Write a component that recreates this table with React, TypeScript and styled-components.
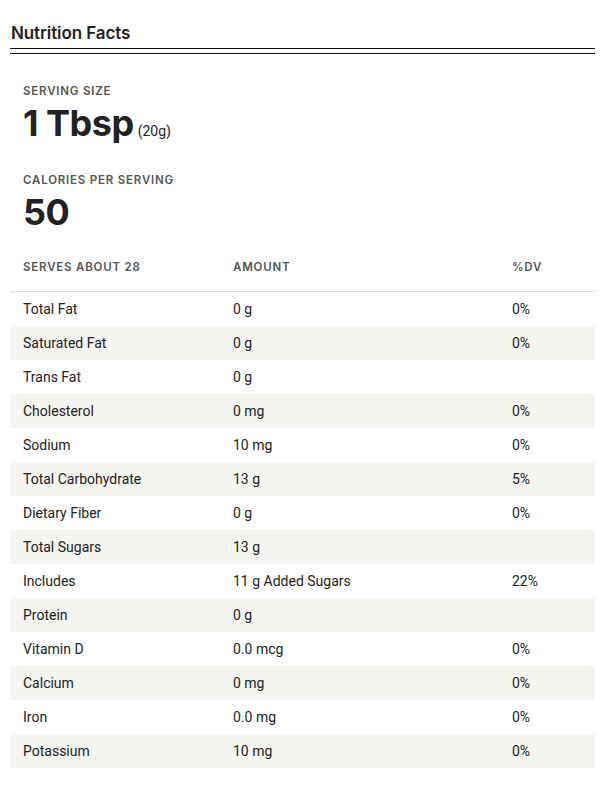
import React from "react";
import styled, { createGlobalStyle } from "styled-components";

const Global = createGlobalStyle`
  html, body { margin: 0; padding: 0; background: #fff; }
  body { font-family: Roboto, "Liberation Sans", sans-serif; color: #222; }
`;

const Panel = styled.div`
  width: 585px;
  margin: 0 0 0 10px;
  padding-top: 22px;
`;

const Title = styled.h2`
  margin: 0;
  padding: 0 0 0 1px;
  font-family: Inter, "Liberation Sans", sans-serif;
  font-weight: 600;
  font-size: 17px;
  line-height: 22px;
  color: #222;
  letter-spacing: -0.1px;
`;

const DoubleRule = styled.div`
  margin-top: 4px;
  height: 4px;
  border-top: 1px solid #111;
  border-bottom: 1px solid #111;
`;

const Summary = styled.div`
  padding: 30px 13px 28px;
  display: flex;
  flex-direction: column;
`;

const Label = styled.div`
  font-family: Inter, "Liberation Sans", sans-serif;
  font-weight: 600;
  font-size: 11.5px;
  line-height: 14px;
  letter-spacing: 0.8px;
  color: #555;
  text-transform: uppercase;
`;

const BigValue = styled.div<{ $gap: number }>`
  font-family: Inter, "Liberation Sans", sans-serif;
  font-weight: 700;
  font-size: 36px;
  line-height: 40px;
  color: #222;
  letter-spacing: -0.5px;
  margin-top: 5px;
  margin-bottom: ${(p) => p.$gap}px;
`;

const Small = styled.span`
  font-family: Roboto, "Liberation Sans", sans-serif;
  font-weight: 400;
  font-size: 14px;
  letter-spacing: 0;
  margin-left: 4px;
`;

const Table = styled.div`
  display: flex;
  flex-direction: column;
`;

const Grid = styled.div`
  display: grid;
  grid-template-columns: 210px 279px 1fr;
  padding-left: 13px;
  align-items: center;
`;

const HeadRow = styled(Grid)`
  align-items: end;
  border-bottom: 1px solid #dcdcdc;
`;

const HeadCell = styled(Label)`
  padding-bottom: 17px;
`;

const Row = styled(Grid)<{ $shade: boolean }>`
  height: 34px;
  background: ${(p) => (p.$shade ? "#f5f5f2" : "#fff")};
`;

const Cell = styled.div`
  font-size: 14px;
  line-height: 18px;
  color: #222;
`;

const rows: [string, string, string][] = [
  ["Total Fat", "0 g", "0%"],
  ["Saturated Fat", "0 g", "0%"],
  ["Trans Fat", "0 g", ""],
  ["Cholesterol", "0 mg", "0%"],
  ["Sodium", "10 mg", "0%"],
  ["Total Carbohydrate", "13 g", "5%"],
  ["Dietary Fiber", "0 g", "0%"],
  ["Total Sugars", "13 g", ""],
  ["Includes", "11 g Added Sugars", "22%"],
  ["Protein", "0 g", ""],
  ["Vitamin D", "0.0 mcg", "0%"],
  ["Calcium", "0 mg", "0%"],
  ["Iron", "0.0 mg", "0%"],
  ["Potassium", "10 mg", "0%"],
];

export default function App() {
  return (
    <>
      <Global />
      <Panel>
        <Title>Nutrition Facts</Title>
        <DoubleRule />
        <Summary>
          <Label>Serving Size</Label>
          <BigValue $gap={22}>
            1 Tbsp<Small>(20g)</Small>
          </BigValue>
          <Label>Calories per serving</Label>
          <BigValue $gap={0}>50</BigValue>
        </Summary>
        <Table>
          <HeadRow>
            <HeadCell>Serves about 28</HeadCell>
            <HeadCell>Amount</HeadCell>
            <HeadCell>%DV</HeadCell>
          </HeadRow>
          {rows.map(([n, a, d], i) => (
            <Row key={n} $shade={i % 2 === 1}>
              <Cell>{n}</Cell>
              <Cell>{a}</Cell>
              <Cell>{d}</Cell>
            </Row>
          ))}
        </Table>
      </Panel>
    </>
  );
}
